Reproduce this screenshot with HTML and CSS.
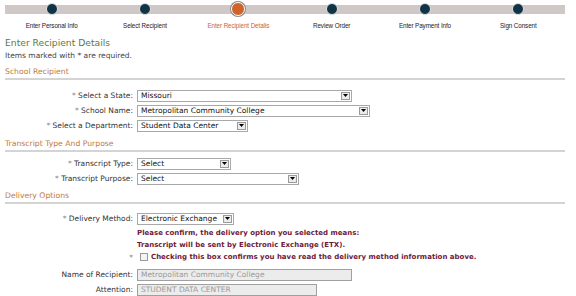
FILE: index.html
```html
<!DOCTYPE html>
<html>
<head>
<meta charset="utf-8">
<link rel="stylesheet" href="styles.css">
</head>
<body>
<div class="steps">
  <div class="bar"></div>
  <div class="step"><span class="dot"></span><span class="lbl">Enter Personal Info</span></div>
  <div class="step"><span class="dot"></span><span class="lbl">Select Recipient</span></div>
  <div class="step active"><span class="dot"></span><span class="lbl">Enter Recipient Details</span></div>
  <div class="step"><span class="dot"></span><span class="lbl">Review Order</span></div>
  <div class="step"><span class="dot"></span><span class="lbl">Enter Payment Info</span></div>
  <div class="step"><span class="dot"></span><span class="lbl">Sign Consent</span></div>
</div>

<h1 class="title">Enter Recipient Details</h1>
<p class="note">Items marked with * are required.</p>

<h2 class="section s1">School Recipient</h2>
<div class="rows first">
  <div class="row"><label class="lab"><span class="req">*</span> Select a State:</label><div class="sel w-state"><span class="txt">Missouri</span><span class="arr"><svg width="5" height="3" viewBox="0 0 5 3"><path d="M0 0H5L2.5 3Z" fill="#000"/></svg></span></div></div>
  <div class="row"><label class="lab"><span class="req">*</span> School Name:</label><div class="sel w-school"><span class="txt">Metropolitan Community College</span><span class="arr"><svg width="5" height="3" viewBox="0 0 5 3"><path d="M0 0H5L2.5 3Z" fill="#000"/></svg></span></div></div>
  <div class="row"><label class="lab"><span class="req">*</span> Select a Department:</label><div class="sel w-dept"><span class="txt">Student Data Center</span><span class="arr"><svg width="5" height="3" viewBox="0 0 5 3"><path d="M0 0H5L2.5 3Z" fill="#000"/></svg></span></div></div>
</div>

<h2 class="section s2">Transcript Type And Purpose</h2>
<div class="rows second">
  <div class="row"><label class="lab"><span class="req">*</span> Transcript Type:</label><div class="sel w-type"><span class="txt">Select</span><span class="arr"><svg width="5" height="3" viewBox="0 0 5 3"><path d="M0 0H5L2.5 3Z" fill="#000"/></svg></span></div></div>
  <div class="row"><label class="lab"><span class="req">*</span> Transcript Purpose:</label><div class="sel w-purpose"><span class="txt">Select</span><span class="arr"><svg width="5" height="3" viewBox="0 0 5 3"><path d="M0 0H5L2.5 3Z" fill="#000"/></svg></span></div></div>
</div>

<h2 class="section s3">Delivery Options</h2>
<div class="rows third">
  <div class="row"><label class="lab"><span class="req">*</span> Delivery Method:</label><div class="sel w-method"><span class="txt">Electronic Exchange</span><span class="arr"><svg width="5" height="3" viewBox="0 0 5 3"><path d="M0 0H5L2.5 3Z" fill="#000"/></svg></span></div></div>
  <div class="row msg top"><span class="lab"></span><span class="warn">Please confirm, the delivery option you selected means:</span></div>
  <div class="row msg"><span class="lab"></span><span class="warn">Transcript will be sent by Electronic Exchange (ETX).</span></div>
  <div class="row msg"><span class="lab"><span class="req">*</span></span><span class="warn"><span class="chk"></span>Checking this box confirms you have read the delivery method information above.</span></div>
  <div class="row inp-row gap"><label class="lab">Name of Recipient:</label><div class="inp w-name">Metropolitan Community College</div></div>
  <div class="row inp-row"><label class="lab">Attention:</label><div class="inp w-attn">STUDENT DATA CENTER</div></div>
</div>
</body>
</html>
```

FILE: styles.css
```css
* { box-sizing: border-box; }
html, body { margin: 0; padding: 0; background: #fff; }
body {
  font-family: "DejaVu Sans", Verdana, sans-serif;
  font-size: 7.5px;
  color: #333;
  width: 576px;
  height: 296px;
  overflow: hidden;
}
.steps {
  position: relative;
  display: flex;
  margin: 3px 11px 0 5px;
  height: 29px;
}
.bar {
  position: absolute;
  left: 0; right: 0; top: 2px;
  height: 9px;
  background: #cfc8c6;
}
.step {
  position: relative;
  flex: 1;
  display: flex;
  flex-direction: column;
  align-items: center;
}
.dot {
  width: 12px;
  height: 12px;
  border-radius: 50%;
  background: #0f3446;
  border: 1.5px solid #e4e0df;
}
.step.active .dot {
  width: 14px;
  height: 14px;
  margin-top: -1px;
  background: #d0622a;
  border: 1.5px solid #fff;
  box-shadow: 0 0 0 1px #8a8a8a;
}
.lbl {
  margin-top: 7px;
  font-family: "Liberation Sans", Arial, sans-serif;
  font-size: 6.3px;
  color: #222;
  letter-spacing: -0.1px;
}
.step.active .lbl { color: #d0622a; margin-top: 6px; }

.title {
  margin: 5px 0 0 5px;
  font-size: 9.2px;
  font-weight: normal;
  color: #5b7a3c;
  line-height: 12px;
}
.note {
  margin: 2px 0 0 5px;
  color: #444;
  line-height: 9px;
}
.section {
  margin: 7px 11px 0 5px;
  font-size: 7.7px;
  font-weight: normal;
  color: #c07a3e;
  line-height: 10px;
  padding-bottom: 1px;
  border-bottom: 2px solid #d4d4d4;
}
.section.s2 { margin-top: 6px; }
.section.s3 { margin-top: 5px; }
.rows.first { margin-top: 8px; }
.rows.second { margin-top: 4px; }
.rows.third { margin-top: 7px; }
.row {
  display: flex;
  align-items: center;
  height: 15px;
}
.lab {
  width: 137px;
  flex: none;
  text-align: right;
  padding-right: 4px;
  color: #333;
}
.req { color: #888; }
.sel {
  height: 12px;
  border: 1px solid #a8a8a8;
  background: #fff;
  display: flex;
  align-items: center;
  justify-content: space-between;
  padding: 0 1px 0 3px;
  color: #111;
}
.arr {
  width: 9px;
  height: 8px;
  border: 1px solid #9a9a9a;
  background: #ececec;
  display: flex;
  align-items: center;
  justify-content: center;
  flex: none;
  margin-left: 3px;
}
.w-state { width: 215px; }
.w-school { width: 233px; }
.w-dept { width: 111px; }
.w-type { width: 94px; }
.w-purpose { width: 162px; }
.w-method { width: 97px; }
.row.msg { height: 12px; }
.row.msg.top { margin-top: 1px; }
.warn {
  color: #6e1a3b;
  font-size: 7px;
  font-weight: bold;
  display: flex;
  align-items: center;
}
.chk {
  width: 8px; height: 8px;
  border: 1px solid #999;
  background: #f4f4f4;
  margin: 0 3px 0 3px;
}
.row.inp-row { height: 15px; }
.row.gap { margin-top: 4px; }
.inp {
  height: 12px;
  border: 1px solid #a0a0a0;
  background: #ececec;
  color: #999;
  padding: 0 3px;
  line-height: 10px;
}
.w-name { width: 215px; }
.w-attn { width: 180px; }
```
